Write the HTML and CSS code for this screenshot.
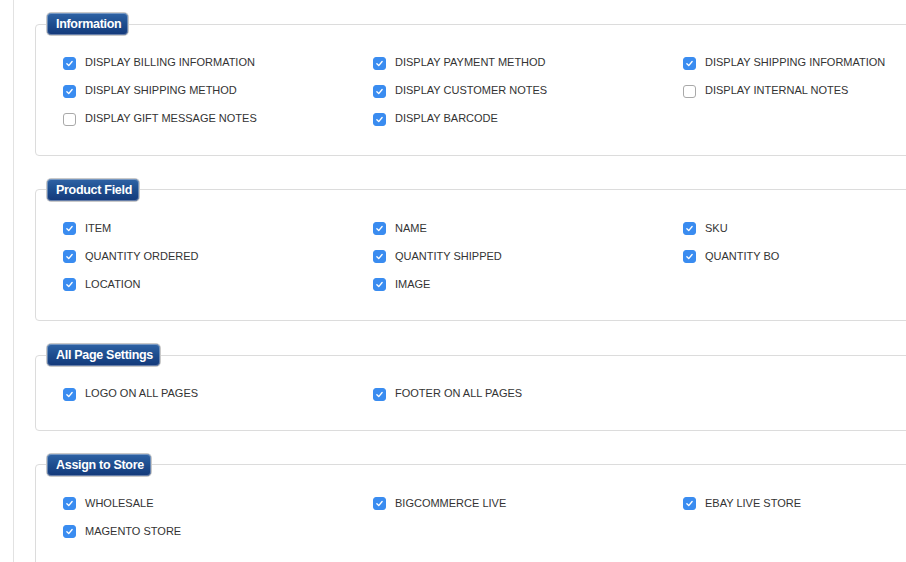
FILE: index.html
```html
<!DOCTYPE html>
<html lang="en">
<head>
    <meta charset="UTF-8">
    <title>Packing Slip Settings</title>
    <link rel="stylesheet" href="styles.css">
</head>
<body>
    <div class="page">
        <!-- Information -->
        <fieldset class="group">
            <legend class="group-title">Information</legend>
            <div class="options">
                <label class="opt"><span class="box on"><svg viewBox="0 0 13 13"><path d="M3.4 6.8 L5.6 9 L9.6 4.2"/></svg></span>DISPLAY BILLING INFORMATION</label>
                <label class="opt"><span class="box on"><svg viewBox="0 0 13 13"><path d="M3.4 6.8 L5.6 9 L9.6 4.2"/></svg></span>DISPLAY PAYMENT METHOD</label>
                <label class="opt"><span class="box on"><svg viewBox="0 0 13 13"><path d="M3.4 6.8 L5.6 9 L9.6 4.2"/></svg></span>DISPLAY SHIPPING INFORMATION</label>
                <label class="opt"><span class="box on"><svg viewBox="0 0 13 13"><path d="M3.4 6.8 L5.6 9 L9.6 4.2"/></svg></span>DISPLAY SHIPPING METHOD</label>
                <label class="opt"><span class="box on"><svg viewBox="0 0 13 13"><path d="M3.4 6.8 L5.6 9 L9.6 4.2"/></svg></span>DISPLAY CUSTOMER NOTES</label>
                <label class="opt"><span class="box"></span>DISPLAY INTERNAL NOTES</label>
                <label class="opt"><span class="box"></span>DISPLAY GIFT MESSAGE NOTES</label>
                <label class="opt"><span class="box on"><svg viewBox="0 0 13 13"><path d="M3.4 6.8 L5.6 9 L9.6 4.2"/></svg></span>DISPLAY BARCODE</label>
            </div>
        </fieldset>

        <!-- Product Field -->
        <fieldset class="group">
            <legend class="group-title">Product Field</legend>
            <div class="options">
                <label class="opt"><span class="box on"><svg viewBox="0 0 13 13"><path d="M3.4 6.8 L5.6 9 L9.6 4.2"/></svg></span>ITEM</label>
                <label class="opt"><span class="box on"><svg viewBox="0 0 13 13"><path d="M3.4 6.8 L5.6 9 L9.6 4.2"/></svg></span>NAME</label>
                <label class="opt"><span class="box on"><svg viewBox="0 0 13 13"><path d="M3.4 6.8 L5.6 9 L9.6 4.2"/></svg></span>SKU</label>
                <label class="opt"><span class="box on"><svg viewBox="0 0 13 13"><path d="M3.4 6.8 L5.6 9 L9.6 4.2"/></svg></span>QUANTITY ORDERED</label>
                <label class="opt"><span class="box on"><svg viewBox="0 0 13 13"><path d="M3.4 6.8 L5.6 9 L9.6 4.2"/></svg></span>QUANTITY SHIPPED</label>
                <label class="opt"><span class="box on"><svg viewBox="0 0 13 13"><path d="M3.4 6.8 L5.6 9 L9.6 4.2"/></svg></span>QUANTITY BO</label>
                <label class="opt"><span class="box on"><svg viewBox="0 0 13 13"><path d="M3.4 6.8 L5.6 9 L9.6 4.2"/></svg></span>LOCATION</label>
                <label class="opt"><span class="box on"><svg viewBox="0 0 13 13"><path d="M3.4 6.8 L5.6 9 L9.6 4.2"/></svg></span>IMAGE</label>
            </div>
        </fieldset>

        <!-- All Page Settings -->
        <fieldset class="group">
            <legend class="group-title">All Page Settings</legend>
            <div class="options">
                <label class="opt"><span class="box on"><svg viewBox="0 0 13 13"><path d="M3.4 6.8 L5.6 9 L9.6 4.2"/></svg></span>LOGO ON ALL PAGES</label>
                <label class="opt"><span class="box on"><svg viewBox="0 0 13 13"><path d="M3.4 6.8 L5.6 9 L9.6 4.2"/></svg></span>FOOTER ON ALL PAGES</label>
            </div>
        </fieldset>

        <!-- Assign to Store -->
        <fieldset class="group">
            <legend class="group-title">Assign to Store</legend>
            <div class="options">
                <label class="opt"><span class="box on"><svg viewBox="0 0 13 13"><path d="M3.4 6.8 L5.6 9 L9.6 4.2"/></svg></span>WHOLESALE</label>
                <label class="opt"><span class="box on"><svg viewBox="0 0 13 13"><path d="M3.4 6.8 L5.6 9 L9.6 4.2"/></svg></span>BIGCOMMERCE LIVE</label>
                <label class="opt"><span class="box on"><svg viewBox="0 0 13 13"><path d="M3.4 6.8 L5.6 9 L9.6 4.2"/></svg></span>EBAY LIVE STORE</label>
                <label class="opt"><span class="box on"><svg viewBox="0 0 13 13"><path d="M3.4 6.8 L5.6 9 L9.6 4.2"/></svg></span>MAGENTO STORE</label>
            </div>
        </fieldset>
    </div>
</body>
</html>
```

FILE: styles.css
```css
/* reset */
* {
    margin: 0;
    padding: 0;
    box-sizing: border-box;
}

html, body {
    width: 100%;
    height: 100%;
    overflow: hidden;
    background: #fff;
}

body {
    font-family: "Liberation Sans", Arial, Helvetica, sans-serif;
    color: #333;
}

/* page column with the left rule */
.page {
    margin-left: 13px;
    min-height: 100%;
    width: 1000px;
    border-left: 1px solid #e2e2e2;
    padding: 12px 0 0 21px;
}

/* settings group */
.group {
    border: 1px solid #dcdcdc;
    border-radius: 4px;
    padding: 0 0 22.5px 27px;
    margin-bottom: 22px;
}

.group-title {
    margin-left: -17px;
    height: 24px;
    padding: 0 7px 0 9px;
    line-height: 22px;
    font-size: 12.5px;
    font-weight: 700;
    color: #fff;
    letter-spacing: -0.3px;
    background: linear-gradient(180deg, #2f63a5 0%, #1d4d8e 50%, #14397a 100%);
    border: 1px solid #c9c9c9;
    border-radius: 5px;
    box-shadow: inset 0 0 0 1px rgba(255,255,255,0.35);
}

/* checkbox grid */
.options {
    display: grid;
    grid-template-columns: repeat(3, 310px);
    padding-top: 12px;
}

.opt {
    display: flex;
    align-items: center;
    height: 28px;
    font-size: 11px;
    gap: 9px;
    cursor: pointer;
}

.box {
    width: 13px;
    height: 13px;
    flex: none;
    margin-top: 2px;
    border: 1px solid #a9a9a9;
    border-radius: 3px;
    background: #fff;
    display: flex;
}

.box.on {
    border-color: #3a8cf0;
    background: #3a8cf0;
}

.box svg {
    width: 11px;
    height: 11px;
}

.box svg path {
    fill: none;
    stroke: #fff;
    stroke-width: 1.6;
    stroke-linecap: round;
    stroke-linejoin: round;
}
```
